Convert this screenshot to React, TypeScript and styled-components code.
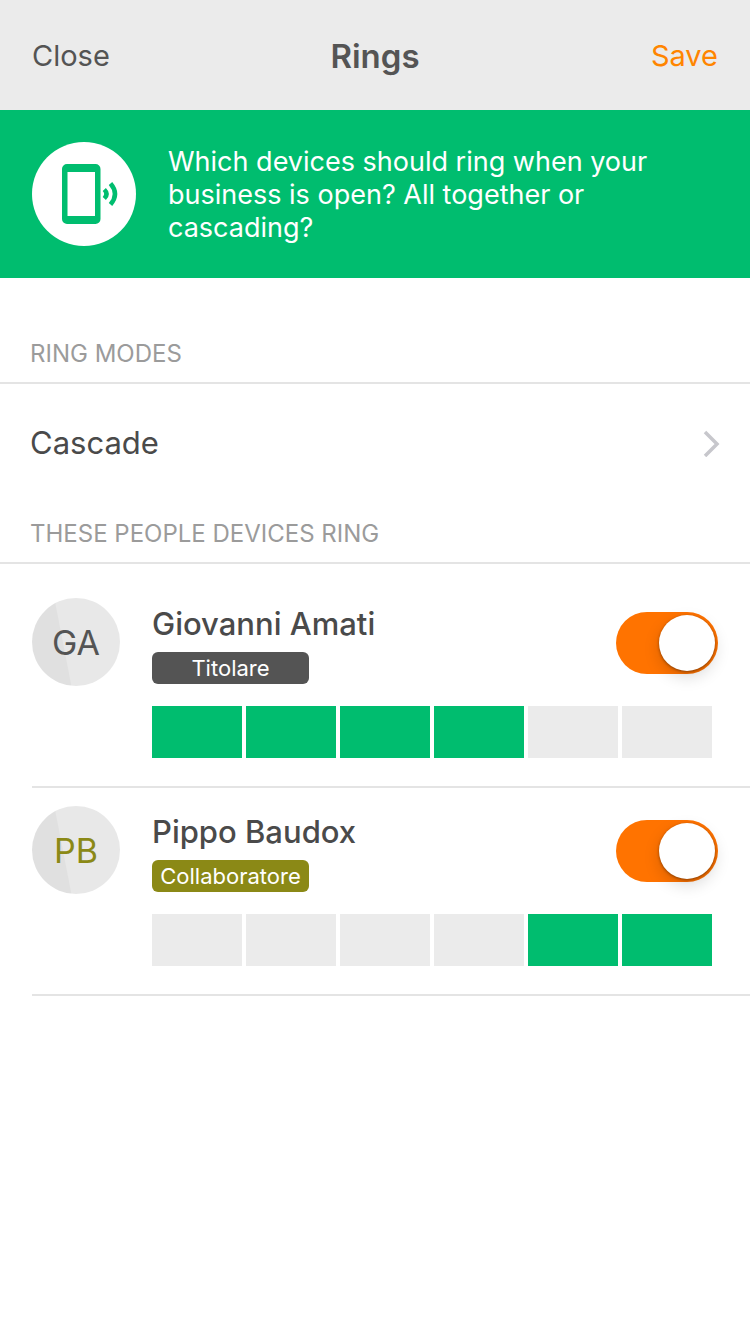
import React, { useState } from 'react';
import styled, { createGlobalStyle } from 'styled-components';

const GlobalStyle = createGlobalStyle`
  * { box-sizing: border-box; }
  body {
    margin: 0;
    background: #fff;
    color: #4a4a4a;
    font-family: Inter, "Liberation Sans", sans-serif;
  }
  button {
    border: 0;
    padding: 0;
    background: none;
    color: inherit;
    font-family: inherit;
    cursor: pointer;
  }
`;

const NavBar = styled.header`
  display: grid;
  grid-template-columns: 1fr auto 1fr;
  align-items: center;
  height: 110px;
  padding: 2px 32px 0;
  background: #ebebeb;
  color: #545454;
`;

const NavButton = styled.button<{ $primary?: boolean }>`
  justify-self: ${({ $primary }) => ($primary ? 'end' : 'start')};
  font-size: 29px;
  line-height: 42px;
  color: ${({ $primary }) => ($primary ? '#ff8500' : '#545454')};
`;

const NavTitle = styled.h1`
  margin: 0;
  font-size: 33px;
  line-height: 40px;
  font-weight: 600;
`;

const Banner = styled.section`
  display: flex;
  align-items: center;
  gap: 32px;
  padding: 32px;
  background: #00bd6f;
  color: #fff;
`;

const BannerIcon = styled.svg`
  flex: none;
  width: 104px;
  height: 104px;
`;

const BannerText = styled.p`
  max-width: 500px;
  margin: 0;
  font-size: 27px;
  line-height: 33px;
`;

const SectionTitle = styled.h2<{ $first?: boolean }>`
  margin: 0;
  padding: ${({ $first }) => ($first ? 62 : 16)}px 30px 14px;
  border-bottom: 2px solid #e4e4e4;
  font-size: 24px;
  line-height: 28px;
  font-weight: 400;
  color: #9b9b9b;
`;

const ModeRow = styled.button`
  display: flex;
  align-items: center;
  justify-content: space-between;
  width: 100%;
  height: 120px;
  padding: 0 30px 2px;
  font-size: 31px;
  line-height: 40px;
  text-align: left;
`;

const Chevron = styled.svg`
  width: 18px;
  height: 28px;
`;

const People = styled.ul`
  list-style: none;
  margin: 0;
  padding: 16px 0 0 32px;
`;

const PersonRow = styled.li`
  display: grid;
  grid-template-columns: 88px 1fr auto;
  column-gap: 32px;
  row-gap: 20px;
  padding: 18px 32px 28px 0;
  border-bottom: 2px solid #e4e4e4;
`;

const Avatar = styled.div<{ $color: string }>`
  display: flex;
  align-items: center;
  justify-content: center;
  width: 88px;
  height: 88px;
  border-radius: 50%;
  background: linear-gradient(79deg, #e0e0e0 37%, #e8e8e8 38%);
  color: ${({ $color }) => $color};
  font-size: 34px;
`;

const Identity = styled.div`
  display: flex;
  flex-direction: column;
  align-items: flex-start;
  gap: 8px;
  padding-top: 6px;
`;

const Name = styled.label`
  font-size: 31px;
  line-height: 40px;
  font-weight: 500;
`;

const RoleTag = styled.span<{ $color: string }>`
  width: 157px;
  border-radius: 6px;
  background: ${({ $color }) => $color};
  color: #fff;
  font-size: 22px;
  line-height: 32px;
  text-align: center;
`;

const Toggle = styled.input`
  appearance: none;
  display: flex;
  align-items: center;
  width: 102px;
  height: 62px;
  margin: 14px 0 0;
  padding: 3px;
  border-radius: 31px;
  background: #d8d8d8;
  cursor: pointer;

  &::before {
    content: '';
    width: 56px;
    height: 56px;
    border-radius: 50%;
    background: #fff;
    box-shadow: 0 1px 3px rgba(0, 0, 0, 0.4), 0 6px 16px rgba(0, 0, 0, 0.15);
  }

  &:checked {
    justify-content: flex-end;
    background: #ff7300;
  }
`;

const Timeline = styled.div`
  grid-column: 2 / 4;
  display: flex;
  gap: 4px;
  margin-right: 6px;
`;

const Slot = styled.span<{ $active: boolean }>`
  flex: 1;
  height: 52px;
  background: ${({ $active }) => ($active ? '#00bd6f' : '#ebebeb')};
`;

interface Person {
  id: string;
  initials: string;
  name: string;
  role: string;
  color: string;
  slots: boolean[];
}

const people: Person[] = [
  {
    id: 'giovanni',
    initials: 'GA',
    name: 'Giovanni Amati',
    role: 'Titolare',
    color: '#545454',
    slots: [true, true, true, true, false, false],
  },
  {
    id: 'pippo',
    initials: 'PB',
    name: 'Pippo Baudox',
    role: 'Collaboratore',
    color: '#8b8916',
    slots: [false, false, false, false, true, true],
  },
];

function PersonItem({ person }: { person: Person }) {
  const [enabled, setEnabled] = useState(true);
  return (
    <PersonRow>
      <Avatar $color={person.color} aria-hidden="true">{person.initials}</Avatar>
      <Identity>
        <Name htmlFor={person.id}>{person.name}</Name>
        <RoleTag $color={person.color}>{person.role}</RoleTag>
      </Identity>
      <Toggle
        id={person.id}
        type="checkbox"
        role="switch"
        checked={enabled}
        onChange={(event) => setEnabled(event.target.checked)}
      />
      <Timeline>
        {person.slots.map((active, index) => (
          <Slot key={index} $active={active} />
        ))}
      </Timeline>
    </PersonRow>
  );
}

export default function App() {
  return (
    <>
      <GlobalStyle />
      <NavBar>
        <NavButton type="button">Close</NavButton>
        <NavTitle>Rings</NavTitle>
        <NavButton type="button" $primary>Save</NavButton>
      </NavBar>
      <main>
        <Banner>
          <BannerIcon viewBox="0 0 104 104" aria-hidden="true">
            <circle cx="52" cy="52" r="52" fill="#fff" />
            <path
              fill="#00bd6f"
              fillRule="evenodd"
              d="M35 22h28.500a5 5 0 0 1 5 5v50a5 5 0 0 1-5 5h-28.500a5 5 0 0 1-5-5v-50a5 5 0 0 1 5-5zM35.500 30v44h27.500v-44z"
            />
            <path
              fill="none"
              stroke="#00bd6f"
              strokeWidth="4.500"
              d="M72.300 47.500q4.500 4.500 0 9M78.500 41.500q9 10.500 0 21"
            />
          </BannerIcon>
          <BannerText>
            Which devices should ring when your business is open? All together or cascading?
          </BannerText>
        </Banner>
        <SectionTitle $first>RING MODES</SectionTitle>
        <ModeRow type="button">
          Cascade
          <Chevron viewBox="0 0 18 28" aria-hidden="true">
            <path d="M3 3l12 12L3 27" fill="none" stroke="#c7c7cc" strokeWidth="3.500" />
          </Chevron>
        </ModeRow>
        <SectionTitle>THESE PEOPLE DEVICES RING</SectionTitle>
        <People>
          {people.map((person) => (
            <PersonItem key={person.id} person={person} />
          ))}
        </People>
      </main>
    </>
  );
}
